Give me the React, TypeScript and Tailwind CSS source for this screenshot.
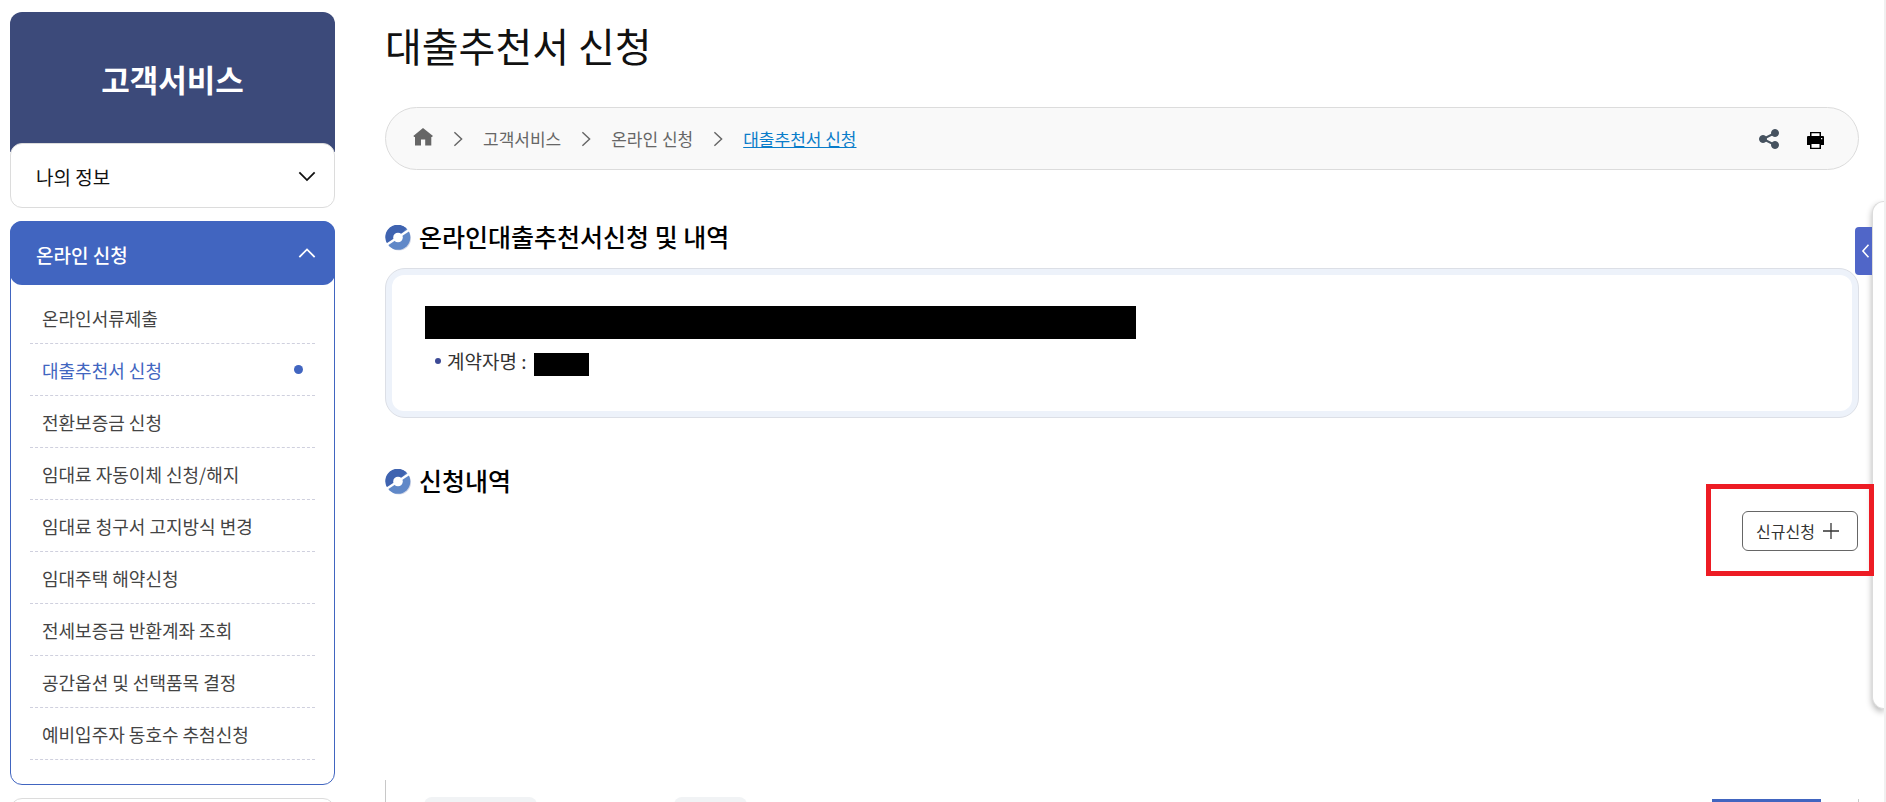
import { useState } from 'react'

const SUB_MENU = [
  '온라인서류제출',
  '대출추천서 신청',
  '전환보증금 신청',
  '임대료 자동이체 신청/해지',
  '임대료 청구서 고지방식 변경',
  '임대주택 해약신청',
  '전세보증금 반환계좌 조회',
  '공간옵션 및 선택품목 결정',
  '예비입주자 동호수 추첨신청',
]

function LineIcon({ d, className, width = 2 }: { d: string; className: string; width?: number }) {
  return (
    <svg viewBox="0 0 20 20" className={className} fill="none" stroke="currentColor" strokeWidth={width} aria-hidden="true">
      <path d={d} />
    </svg>
  )
}

function SectionTitle({ children }: { children: string }) {
  return (
    <h2 className="flex items-center gap-2 text-[25px] leading-9 font-medium text-black">
      <svg viewBox="0 0 26 26" className="mt-1 size-[26px]" aria-hidden="true">
        <circle cx="14" cy="13.5" r="12" fill="#d5d9e8" />
        <circle cx="13" cy="12.5" r="12.3" fill="#6088c8" />
        <path d="M2.500 19A12.300 12.300 0 0 1 21.500 3.500L13 12.500z" fill="#3f63b0" />
        <path d="M2 19.500L24 5" stroke="#fff" strokeWidth="2.300" />
        <circle cx="13" cy="12.5" r="4.8" fill="#fff" />
      </svg>
      {children}
    </h2>
  )
}

function Sidebar() {
  const [active, setActive] = useState(1)

  return (
    <aside className="w-[325px] shrink-0 pt-3">
      <div className="flex h-[140px] justify-center rounded-t-xl bg-[#3c4a7a] pt-11 text-[31px] leading-[46px] font-bold text-white">
        고객서비스
      </div>
      <button className="relative -mt-[9px] flex h-[65px] w-full items-center justify-between rounded-xl border border-[#dcdcdc] bg-white pr-[18px] pl-[25px] text-[19px] text-[#111]">
        <span className="pt-1">나의 정보</span>
        <LineIcon d="M1.500 6L10 14.500L18.500 6" className="size-[18px]" />
      </button>

      <div className="mt-[13px] h-[564px] rounded-xl border border-[#4165c0]">
        <button className="-mx-px -mt-px flex h-16 w-[325px] items-center justify-between rounded-xl bg-[#4165c0] pr-[19px] pl-[26px] text-[19px] font-medium text-white">
          <span className="pt-1">온라인 신청</span>
          <LineIcon d="M1.500 14.500L10 6L18.500 14.500" className="size-[18px]" />
        </button>
        <ul className="px-[19px] pt-[7px]">
          {SUB_MENU.map((label, i) => (
            <li key={label} className="border-b border-dashed border-[#cfd0de]">
              <a
                href="#"
                onClick={() => setActive(i)}
                className={`flex h-[51px] items-center justify-between px-3 text-lg ${i === active ? 'text-[#4165c0]' : 'text-[#444]'}`}
              >
                {label}
                {i === active && <span className="size-[9px] rounded-full bg-[#4165c0]" />}
              </a>
            </li>
          ))}
        </ul>
      </div>
      <div className="mt-[13px] h-[65px] rounded-xl border border-[#dcdcdc]" />
    </aside>
  )
}

function Breadcrumb() {
  return (
    <nav className="mt-6 flex h-[63px] items-center justify-between rounded-full border border-[#dcdcdc] bg-[#f9f9f9] pr-[34px] pl-[27px] text-[17px] text-[#666]">
      <div className="flex items-center gap-4">
        <a href="#" aria-label="홈">
          <svg viewBox="0 0 20 18" className="mb-1 h-[18px] w-5" fill="#666" aria-hidden="true">
            <path d="M10 0L20 8L18.800 9H18.300V17.500H12.200V11.500H8V17.500H2V9H1.300L.300 8z" />
          </svg>
        </a>
        <LineIcon d="M6 2.500L14 10L6 17.500" className="size-[18px]" width={1.6} />
        <a href="#">고객서비스</a>
        <LineIcon d="M6 2.500L14 10L6 17.500" className="size-[18px]" width={1.6} />
        <a href="#">온라인 신청</a>
        <LineIcon d="M6 2.500L14 10L6 17.500" className="size-[18px]" width={1.6} />
        <a href="#" className="text-[#0a7dca] underline">대출추천서 신청</a>
      </div>
      <div className="flex items-center gap-7">
        <button aria-label="공유">
          <svg viewBox="0 0 20 20" className="size-5" fill="#46525f" stroke="#46525f" aria-hidden="true">
            <path d="M16 4L4 10L16 16" fill="none" strokeWidth="2" />
            <circle cx="16" cy="4" r="3.5" />
            <circle cx="4" cy="10" r="3.5" />
            <circle cx="16" cy="16" r="3.5" />
          </svg>
        </button>
        <button aria-label="인쇄" className="pt-1">
          <svg viewBox="0 0 17 17" className="size-[17px]" aria-hidden="true">
            <path d="M3 0H14V4H16Q17 4 17 5V13H14V17H3V13H0V5Q0 4 1 4H3z" fill="#000" />
            <path d="M4.500 1.300H12.500V4H4.500zM4.500 12H12.500V15.700H4.500zM14 6H15.300V7.300H14z" fill="#fff" />
          </svg>
        </button>
      </div>
    </nav>
  )
}

export default function App() {
  return (
    <div className="relative flex h-screen gap-[50px] overflow-hidden border-r-2 border-[#f0f0f0] bg-white pr-[25px] pl-[10px] font-['Noto_Sans_CJK_KR','Noto_Sans',sans-serif]">
      <Sidebar />

      <main className="min-w-0 flex-1 pt-[11px]">
        <h1 className="pb-1 text-[40px] leading-[68px] text-[#111]">대출추천서 신청</h1>
        <Breadcrumb />

        <section className="mt-12">
          <SectionTitle>온라인대출추천서신청 및 내역</SectionTitle>
          <div className="mt-[14px] rounded-[20px] border border-[#dcdfe6] bg-[#edf2fa] p-[6px]">
            <div className="h-[136px] rounded-xl bg-white pt-[31px] pl-[33px]">
              <div className="h-[33px] w-full max-w-[711px] bg-black" />
              <div className="mt-2 flex h-7 items-center pl-[10px] text-[19px] text-[#333]">
                <span className="mr-[6px] size-[6px] rounded-full bg-[#3c4a96]" />
                계약자명 :
                <span className="mt-[6px] ml-2 h-[23px] w-[55px] bg-black" />
              </div>
            </div>
          </div>
        </section>

        <section className="mt-11">
          <SectionTitle>신청내역</SectionTitle>
          <div className="mt-[13px] flex justify-end pr-px">
            <button className="flex h-10 w-[116px] items-center justify-between rounded-md border border-[#666] pr-[18px] pl-[13px] text-base whitespace-nowrap text-[#333]">
              신규신청
              <LineIcon d="M10 0V20M0 10H20" className="size-4" width={1.6} />
            </button>
          </div>
          <div className="mt-[229px] flex h-[200px] border-l border-[#c8c8c8]">
            <div className="mt-[17px] ml-[38px] h-10 w-[113px] rounded-lg bg-[#f1f3f5]" />
            <div className="mt-[17px] ml-[137px] h-10 w-[73px] rounded-lg bg-[#f1f3f5]" />
            <div className="mt-[19px] ml-auto border-r border-[#c8c8c8] pr-[37px]">
              <div className="h-10 w-[109px] bg-[#4165c0]" />
            </div>
          </div>
        </section>
      </main>

      {/* Highlight around the new application button */}
      <div className="pointer-events-none absolute top-[484px] right-[10px] z-20 h-[92px] w-[168px] border-5 border-[#ed1c24]" />

      {/* Quick menu drawer */}
      <div className="absolute top-[201px] right-0 z-10 h-[508px] w-3 rounded-l-xl border border-r-0 border-[#dcdcdc] bg-white shadow-[0_3px_6px_rgba(0,0,0,0.3)]" />
      <button aria-label="퀵메뉴 열기" className="absolute top-[227px] right-3 z-10 flex h-12 w-[17px] items-center justify-end rounded-l bg-[#5066c8] text-white">
        <LineIcon d="M15 1L7 10L15 19" className="size-[14px]" width={2.2} />
      </button>
    </div>
  )
}
